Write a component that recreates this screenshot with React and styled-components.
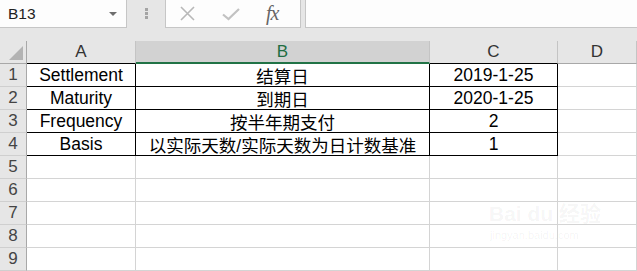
import { Fragment } from 'react'
import styled, { createGlobalStyle } from 'styled-components'

const GlobalStyle = createGlobalStyle`
    html, body {
        margin: 0;
        padding: 0;
        background: #e6e6e6;
        overflow: hidden;
    }
`

const Sheet = styled.div`
    position: relative;
    width: 637px;
    height: 271px;
    background: #e6e6e6;
    overflow: hidden;
    font-family: "Liberation Sans", "Noto Sans CJK SC", sans-serif;
`

const Toolbar = styled.div`
    display: flex;
    height: 41px;
    box-sizing: border-box;
    padding-bottom: 13px;
`

const NameBox = styled.div`
    display: flex;
    align-items: center;
    justify-content: space-between;
    width: 127px;
    box-sizing: border-box;
    padding: 0 9px 0 8px;
    background: #fdfdfd;
    border-right: 1px solid #c6c6c6;
    border-bottom: 1px solid #c6c6c6;
    font-size: 15.5px;
    color: #222;
`

const Arrow = styled.span`
    width: 0;
    height: 0;
    border-left: 4px solid transparent;
    border-right: 4px solid transparent;
    border-top: 4px solid #6e6e6e;
    margin-top: 1px;
`

const Grip = styled.div`
    width: 38px;
    display: flex;
    flex-direction: column;
    align-items: center;
    justify-content: center;
    gap: 1px;
    padding-bottom: 1px;

    span {
        width: 3px;
        height: 3px;
        background: #a4a4a4;
    }
`

const FormulaButtons = styled.div`
    display: flex;
    align-items: center;
    width: 136px;
    box-sizing: border-box;
    background: #fdfdfd;
    border-left: 1px solid #c6c6c6;
    border-right: 1px solid #c6c6c6;
    border-bottom: 1px solid #c6c6c6;
    padding-left: 14px;
    gap: 27px;
`

const Fx = styled.span`
    font-family: "Liberation Serif", serif;
    font-style: italic;
    font-size: 20px;
    color: #666;
    letter-spacing: -1px;
    margin-left: -1px;
`

const FormulaInput = styled.div`
    flex: 1;
    margin-left: 4px;
    background: #fdfdfd;
    border-left: 1px solid #c6c6c6;
    border-bottom: 1px solid #c6c6c6;
`

const Grid = styled.div`
    display: grid;
    grid-template-columns: 27px 109px 294px 128px 1fr;
    grid-template-rows: 23px repeat(9, 23px);
`

const Corner = styled.div`
    position: relative;
    box-sizing: border-box;
    border-right: 1px solid #a8a8a8;
    border-bottom: 1px solid #a8a8a8;

    &::after {
        content: '';
        position: absolute;
        right: 3px;
        bottom: 3px;
        width: 0;
        height: 0;
        border-left: 14px solid transparent;
        border-bottom: 14px solid #b3b3b3;
    }
`

const ColHead = styled.div`
    display: flex;
    align-items: center;
    justify-content: center;
    box-sizing: border-box;
    font-size: 17px;
    color: ${(p) => (p.$active ? '#1f6e43' : '#333')};
    background: ${(p) => (p.$active ? '#d2d2d2' : '#e6e6e6')};
    border-right: 1px solid #c4c4c4;
    border-bottom: ${(p) =>
        p.$active ? '2px solid #217346' : `1px solid ${p.$dark ? '#000' : '#a8a8a8'}`};
    padding-top: ${(p) => (p.$active ? '1px' : '0')};
`

const RowHead = styled.div`
    display: flex;
    align-items: center;
    justify-content: center;
    box-sizing: border-box;
    font-size: 17px;
    color: #444;
    background: #e6e6e6;
    border-right: 1px solid #a8a8a8;
    border-bottom: 1px solid #cfcfcf;
`

const Cell = styled.div`
    display: flex;
    align-items: center;
    justify-content: center;
    box-sizing: border-box;
    background: #fff;
    color: #000;
    font-size: 17.5px;
    white-space: nowrap;
    border-right: 1px solid ${(p) => (p.$boxed ? '#000' : '#d4d4d4')};
    border-bottom: 1px solid ${(p) => (p.$boxed ? '#000' : '#d4d4d4')};
    padding-top: 1px;
`

const Watermark = styled.div`
    position: absolute;
    left: 489px;
    top: 203px;
    color: rgba(0, 0, 0, 0.05);
    font-family: "Liberation Sans", "Noto Sans CJK SC", sans-serif;
    line-height: 1;

    b {
        display: block;
        font-size: 21px;
        font-weight: 700;
    }

    small {
        display: block;
        font-size: 11px;
        margin-top: 6px;
        margin-left: 1px;
    }
`

const columns = ['A', 'B', 'C', 'D']

const rows = [
    ['Settlement', '结算日', '2019-1-25'],
    ['Maturity', '到期日', '2020-1-25'],
    ['Frequency', '按半年期支付', '2'],
    ['Basis', '以实际天数/实际天数为日计数基准', '1'],
    [], [], [], [], [],
]

function App() {
    return (
        <Sheet>
            <GlobalStyle />
            <Toolbar>
                <NameBox>
                    B13
                    <Arrow />
                </NameBox>
                <Grip>
                    <span />
                    <span />
                    <span />
                </Grip>
                <FormulaButtons>
                    <svg width="15" height="15" viewBox="0 0 15 15">
                        <path d="M1 1 L14 14 M14 1 L1 14" stroke="#b8b8b8" strokeWidth="1.6" fill="none" />
                    </svg>
                    <svg width="18" height="14" viewBox="0 0 18 14">
                        <path d="M1 7.5 L6.5 12 L17 2" stroke="#c2c2c2" strokeWidth="2.2" fill="none" />
                    </svg>
                    <Fx>fx</Fx>
                </FormulaButtons>
                <FormulaInput />
            </Toolbar>
            <Grid>
                <Corner />
                {columns.map((c) => (
                    <ColHead key={c} $active={c === 'B'} $dark={c === 'A' || c === 'C'}>
                        {c}
                    </ColHead>
                ))}
                {rows.map((row, i) => (
                    <Fragment key={i}>
                        <RowHead>{i + 1}</RowHead>
                        {[0, 1, 2, 3].map((j) => (
                            <Cell key={j} $boxed={i < 4 && j < 3}>
                                {row[j] || ''}
                            </Cell>
                        ))}
                    </Fragment>
                ))}
            </Grid>
            <Watermark>
                <b>Bai du 经验</b>
                <small>jingyan.baidu.com</small>
            </Watermark>
        </Sheet>
    )
}

export default App
